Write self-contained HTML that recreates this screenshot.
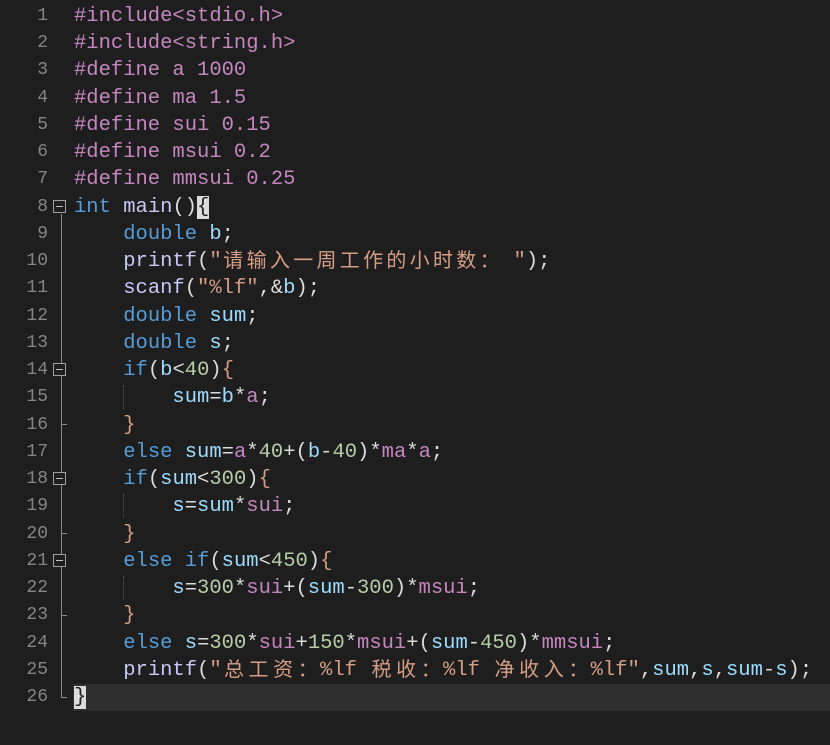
<!DOCTYPE html>
<html><head><meta charset="utf-8"><style>
html,body{margin:0;padding:0;background:#1e1e1e;width:830px;height:745px;overflow:hidden;position:relative}
.ln{position:absolute;left:0;width:48px;text-align:right;color:#858585;font:18px/27px "Liberation Mono","DejaVu Sans Mono",monospace}
.c{position:absolute;left:74px;height:27px;white-space:pre;color:#dcdcdc;font:20.5px/27px "Liberation Mono","Noto Sans CJK SC",monospace}
.k{color:#569cd6}.p{color:#c586c0}.v{color:#9cdcfe}.n{color:#b5cea8}.s{color:#d69d85}.f{color:#c8c8f8}.b{color:#d69d85}
.z{display:inline-block;position:relative;top:-3px;width:24.6px;height:27px;line-height:27px;vertical-align:top;text-align:center;font-family:"Noto Sans CJK SC",sans-serif;font-size:20px}
.l10 .z{width:23.3px}
.box{position:absolute;left:53px;width:11px;height:11px;border:1px solid #a0a0a0;background:#1e1e1e}
.box:after{content:"";position:absolute;left:2px;right:2px;top:5px;height:1px;background:#c0c0c0}
.tick{position:absolute;left:61px;width:6px;height:1px;background:#8a8a8a}
.guide{position:absolute;left:123px;width:0;border-left:1px dotted #555}
</style></head><body>
<div style="position:absolute;left:73px;top:684px;width:757px;height:27px;background:#2f2f2f"></div>
<div style="position:absolute;left:61px;top:214px;width:1px;height:484px;background:#8a8a8a"></div>
<div style="position:absolute;left:61px;top:697px;width:6px;height:1px;background:#8a8a8a"></div>
<div class="box" style="top:200px"></div>
<div class="box" style="top:363px"></div>
<div class="box" style="top:472px"></div>
<div class="box" style="top:554px"></div>
<div class="tick" style="top:424px"></div>
<div class="tick" style="top:533px"></div>
<div class="tick" style="top:615px"></div>
<div class="guide" style="top:385px;height:24px"></div>
<div class="guide" style="top:494px;height:24px"></div>
<div class="guide" style="top:576px;height:24px"></div>
<div class="ln" style="top:3px">1</div><div class="c p" style="top:3px">#include&lt;stdio.h&gt;</div>
<div class="ln" style="top:30px">2</div><div class="c p" style="top:30px">#include&lt;string.h&gt;</div>
<div class="ln" style="top:57px">3</div><div class="c p" style="top:57px">#define a 1000</div>
<div class="ln" style="top:85px">4</div><div class="c p" style="top:85px">#define ma 1.5</div>
<div class="ln" style="top:112px">5</div><div class="c p" style="top:112px">#define sui 0.15</div>
<div class="ln" style="top:139px">6</div><div class="c p" style="top:139px">#define msui 0.2</div>
<div class="ln" style="top:166px">7</div><div class="c p" style="top:166px">#define mmsui 0.25</div>
<div class="ln" style="top:194px">8</div><div class="c" style="top:194px"><span class="k">int</span> <span class="f">main</span>()<span style="background:#dcdcdc;color:#1e1e1e">{</span></div>
<div class="ln" style="top:221px">9</div><div class="c" style="top:221px">    <span class="k">double</span> <span class="v">b</span>;</div>
<div class="ln" style="top:248px">10</div><div class="c l10" style="top:248px">    <span class="f">printf</span>(<span class="s">"<span class="z">请</span><span class="z">输</span><span class="z">入</span><span class="z">一</span><span class="z">周</span><span class="z">工</span><span class="z">作</span><span class="z">的</span><span class="z">小</span><span class="z">时</span><span class="z">数</span><span class="z">：</span> "</span>);</div>
<div class="ln" style="top:275px">11</div><div class="c" style="top:275px">    <span class="f">scanf</span>(<span class="s">"%lf"</span>,&amp;<span class="v">b</span>);</div>
<div class="ln" style="top:303px">12</div><div class="c" style="top:303px">    <span class="k">double</span> <span class="v">sum</span>;</div>
<div class="ln" style="top:330px">13</div><div class="c" style="top:330px">    <span class="k">double</span> <span class="v">s</span>;</div>
<div class="ln" style="top:357px">14</div><div class="c" style="top:357px">    <span class="k">if</span>(<span class="v">b</span>&lt;<span class="n">40</span>)<span class="b">{</span></div>
<div class="ln" style="top:384px">15</div><div class="c" style="top:384px">        <span class="v">sum</span>=<span class="v">b</span>*<span class="p">a</span>;</div>
<div class="ln" style="top:412px">16</div><div class="c" style="top:412px">    <span class="b">}</span></div>
<div class="ln" style="top:439px">17</div><div class="c" style="top:439px">    <span class="k">else</span> <span class="v">sum</span>=<span class="p">a</span>*<span class="n">40</span>+(<span class="v">b</span>-<span class="n">40</span>)*<span class="p">ma</span>*<span class="p">a</span>;</div>
<div class="ln" style="top:466px">18</div><div class="c" style="top:466px">    <span class="k">if</span>(<span class="v">sum</span>&lt;<span class="n">300</span>)<span class="b">{</span></div>
<div class="ln" style="top:493px">19</div><div class="c" style="top:493px">        <span class="v">s</span>=<span class="v">sum</span>*<span class="p">sui</span>;</div>
<div class="ln" style="top:521px">20</div><div class="c" style="top:521px">    <span class="b">}</span></div>
<div class="ln" style="top:548px">21</div><div class="c" style="top:548px">    <span class="k">else</span> <span class="k">if</span>(<span class="v">sum</span>&lt;<span class="n">450</span>)<span class="b">{</span></div>
<div class="ln" style="top:575px">22</div><div class="c" style="top:575px">        <span class="v">s</span>=<span class="n">300</span>*<span class="p">sui</span>+(<span class="v">sum</span>-<span class="n">300</span>)*<span class="p">msui</span>;</div>
<div class="ln" style="top:602px">23</div><div class="c" style="top:602px">    <span class="b">}</span></div>
<div class="ln" style="top:630px">24</div><div class="c" style="top:630px">    <span class="k">else</span> <span class="v">s</span>=<span class="n">300</span>*<span class="p">sui</span>+<span class="n">150</span>*<span class="p">msui</span>+(<span class="v">sum</span>-<span class="n">450</span>)*<span class="p">mmsui</span>;</div>
<div class="ln" style="top:657px">25</div><div class="c" style="top:657px">    <span class="f">printf</span>(<span class="s">"<span class="z">总</span><span class="z">工</span><span class="z">资</span><span class="z">：</span>%lf <span class="z">税</span><span class="z">收</span><span class="z">：</span>%lf <span class="z">净</span><span class="z">收</span><span class="z">入</span><span class="z">：</span>%lf"</span>,<span class="v">sum</span>,<span class="v">s</span>,<span class="v">sum</span>-<span class="v">s</span>);</div>
<div class="ln" style="top:684px">26</div><div class="c" style="top:684px"><span style="background:#dcdcdc;color:#1e1e1e">}</span></div>
</body></html>
